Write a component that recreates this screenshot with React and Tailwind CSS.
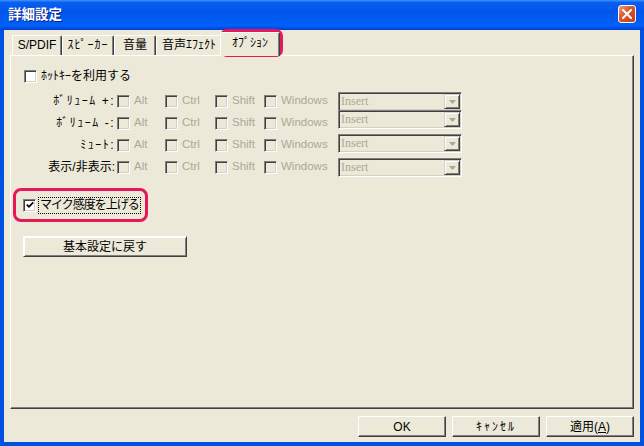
import React from "react";

const font = "font-['Liberation_Sans','Noto_Sans_CJK_JP',sans-serif]";

function CheckBox({ checked = false, disabled = false }) {
  return (
    <span
      className={`flex h-[13px] w-[13px] shrink-0 items-center justify-center border border-t-[#808080] border-l-[#808080] border-b-white border-r-white shadow-[inset_1px_1px_#404040,inset_-1px_-1px_#d4d0c8] ${
        disabled ? "bg-[#ece9d8]" : "bg-white"
      }`}
    >
      {checked && (
        <svg width="8" height="8" viewBox="0 0 8 8">
          <polyline points="0.8,3.6 3,5.8 7.2,1.4" fill="none" stroke="#000" strokeWidth="1.8" />
        </svg>
      )}
    </span>
  );
}

function Combo({ className = "" }) {
  return (
    <div
      className={`flex h-[19px] w-[124px] shrink-0 border border-t-[#808080] border-l-[#808080] border-b-white border-r-white bg-[#ece9d8] p-[1px] shadow-[inset_1px_1px_#404040,inset_-1px_-1px_#d4d0c8] ${className}`}
    >
      <span className="flex-1 pl-[1px] font-['Liberation_Serif',serif] text-[12px] leading-[15px] text-[#aca899]">
        Insert
      </span>
      <span className="flex w-[16px] items-center justify-center border border-t-[#d4d0c8] border-l-[#d4d0c8] border-b-[#404040] border-r-[#404040] shadow-[inset_1px_1px_#fff,inset_-1px_-1px_#808080]">
        <svg width="7" height="4" viewBox="0 0 7 4">
          <path d="M0 0h7L3.5 4z" fill="#aca899" />
        </svg>
      </span>
    </div>
  );
}

function Btn({ children, className = "" }) {
  return (
    <button
      className={`flex h-[21px] items-center justify-center border border-t-white border-l-white border-b-[#404040] border-r-[#404040] bg-[#ece9d8] text-[12px] leading-none text-black shadow-[inset_-1px_-1px_#808080] ${className}`}
    >
      {children}
    </button>
  );
}

const tabs = [
  { label: "S/PDIF", w: "w-[50px]", t: "" },
  { label: "ｽﾋﾟｰｶｰ", w: "w-[52px]", t: "tracking-[1px]" },
  { label: "音量", w: "w-[42px]", t: "" },
  { label: "音声ｴﾌｪｸﾄ", w: "w-[66px]", t: "" },
];

const rows = [
  { label: "ﾎﾞﾘｭｰﾑ +:", combo: "mt-[2px]", t: "tracking-[1.5px]" },
  { label: "ﾎﾞﾘｭｰﾑ -:", combo: "mt-[-2px]", t: "tracking-[1.5px]" },
  { label: "ﾐｭｰﾄ:", combo: "mt-0", t: "tracking-[1.5px]" },
  { label: "表示/非表示:", combo: "mt-[2px]", t: "" },
];

const mods = [
  { label: "Alt", w: "w-[48px]" },
  { label: "Ctrl", w: "w-[50px]" },
  { label: "Shift", w: "w-[49px]" },
  { label: "Windows", w: "w-[74px]" },
];

export default function App() {
  return (
    <div className={`relative flex h-[446px] w-[644px] flex-col overflow-hidden bg-[#0052e0] ${font}`}>
      {/* title bar */}
      <div className="flex h-[30px] shrink-0 items-start bg-[linear-gradient(to_bottom,#3d95ff_0%,#0a5ff0_8%,#0055ea_40%,#0060f8_85%,#0050e6_93%,#003ed0_100%)]">
        <span className="self-center pl-[8px] pb-[1px] text-[13.5px] font-bold leading-none text-white [text-shadow:1px_1px_#0a1f8a]">
          詳細設定
        </span>
        <span className="mr-[8px] ml-auto mt-[5px] flex h-[18px] w-[18px] items-center justify-center rounded-[3px] border border-white bg-[linear-gradient(to_bottom_right,#f09a7a,#d7542c_45%,#c2401c)]">
          <svg width="10" height="10" viewBox="0 0 10 10">
            <path d="M1 1l8 8M9 1l-8 8" stroke="#fff" strokeWidth="2" strokeLinecap="square" />
          </svg>
        </span>
      </div>

      {/* client */}
      <div className="mx-[4px] mb-[4px] flex flex-1 flex-col bg-[#ece9d8] text-[12px] text-black">
        <div className="ml-[8px] mt-[2px] flex h-[23px] items-end">
          {tabs.map((t) => (
            <div
              key={t.label}
              className={`${t.w} ${t.t} flex h-[20px] items-center justify-center rounded-t-[2px] border-t border-l border-r border-t-white border-l-white border-r-[#404040] pb-[1px] leading-none shadow-[inset_-1px_0_#808080]`}
            >
              {t.label}
            </div>
          ))}
          <div className="relative z-10 -mb-px -ml-[2px] flex h-[24px] w-[60px] items-center justify-center rounded-t-[2px] border-t border-l border-r border-t-white border-l-white border-r-[#404040] bg-[#ece9d8] pb-[3px] leading-none shadow-[inset_-1px_0_#808080]">
            ｵﾌﾟｼｮﾝ
          </div>
        </div>

        {/* tab panel */}
        <div className="ml-[6px] flex h-[354px] w-[624px] flex-col border border-t-white border-l-white border-b-[#404040] border-r-[#404040] pl-[13px] shadow-[inset_-1px_-1px_#808080]">
          <div className="mt-[12px] flex h-[16px] items-center">
            <CheckBox />
            <span className="ml-[4px] leading-none">ﾎｯﾄｷｰを利用する</span>
          </div>

          <div className="mt-[6px] flex flex-col">
            {rows.map((r) => (
              <div key={r.label} className="flex h-[22px] items-center">
                <span className={`ml-[12px] w-[79px] shrink-0 text-right leading-none ${r.t}`}>{r.label}</span>
                <div className="ml-[2px] flex">
                  {mods.map((m) => (
                    <div key={m.label} className={`${m.w} flex shrink-0 items-center`}>
                      <CheckBox disabled />
                      <span className="ml-[4px] text-[11.5px] leading-none text-[#aca899]">{m.label}</span>
                    </div>
                  ))}
                </div>
                <Combo className={`self-start ${r.combo}`} />
              </div>
            ))}
          </div>

          <div className="-ml-px mt-[18px] flex h-[18px] items-center">
            <CheckBox checked />
            <span className="ml-[2px] border border-dotted border-black px-[1px] py-[1px] leading-[13px] tracking-[-1px]">
              マイク感度を上げる
            </span>
          </div>

          <Btn className="-ml-px mt-[22px] w-[164px] border-black shadow-[inset_1px_1px_#fff,inset_-1px_-1px_#808080]">
            基本設定に戻す
          </Btn>
        </div>

        {/* bottom buttons */}
        <div className="mt-[7px] flex justify-end gap-[6px] pr-[6px]">
          <Btn className="w-[88px]">OK</Btn>
          <Btn className="w-[88px] tracking-[2px]">ｷｬﾝｾﾙ</Btn>
          <Btn className="w-[88px]">
            適用(<span className="underline">A</span>)
          </Btn>
        </div>
      </div>

      {/* annotation highlights */}
      <div className="pointer-events-none absolute left-[220px] top-[29px] h-[28px] w-[63px] rounded-[7px] border-[3px] border-[#e5185a]" />
      <div className="pointer-events-none absolute left-[13px] top-[188px] h-[34px] w-[135px] rounded-[8px] border-[3px] border-[#e5185a]" />
    </div>
  );
}
